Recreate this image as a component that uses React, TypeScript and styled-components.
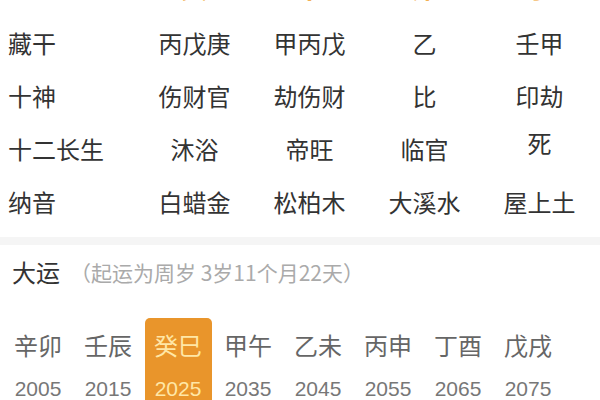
import React from "react";
import styled, { createGlobalStyle } from "styled-components";

const Global = createGlobalStyle`
  html, body { margin: 0; padding: 0; background: #f5f5f5; }
  body { font-family: "Noto Sans CJK SC", "Noto Sans", sans-serif; overflow: hidden; }
`;

const Page = styled.div`
  width: 600px;
  height: 400px;
  overflow: hidden;
  display: flex;
  flex-direction: column;
  gap: 8px;
`;

const Card = styled.section<{ $pad?: string; $grow?: boolean }>`
  background: #ffffff;
  padding: ${(p) => p.$pad || "0"};
  flex: ${(p) => (p.$grow ? 1 : "none")};
`;

const Table = styled.div`
  display: grid;
  grid-template-columns: 137px repeat(4, 115px);
  grid-template-rows: 60px repeat(4, 53px);
  margin-top: -44px;
`;

const Label = styled.div`
  display: flex;
  align-items: center;
  padding-left: 8px;
  font-size: 24px;
  color: #333;
  white-space: nowrap;
`;

const Cell = styled.div<{ $accent?: boolean; $shift?: number }>`
  display: flex;
  align-items: center;
  justify-content: center;
  font-size: ${(p) => (p.$accent ? "28px" : "24px")};
  font-weight: ${(p) => (p.$accent ? 700 : 400)};
  color: ${(p) => (p.$accent ? "#f0a02c" : "#333")};
  white-space: nowrap;
  transform: translateY(${(p) => p.$shift || 0}px);
`;

const Header = styled.div`
  display: flex;
  align-items: center;
  gap: 10px;
  padding: 15px 0 0 12px;
  line-height: 24px;
`;

const Title = styled.span`
  font-size: 24px;
  color: #333;
`;

const Sub = styled.span`
  font-size: 21px;
  color: #aaa;
`;

const Dayun = styled.div`
  display: grid;
  grid-template-columns: repeat(8, 70px);
  padding: 34px 0 0 3px;
`;

const Step = styled.div<{ $active?: boolean }>`
  display: flex;
  flex-direction: column;
  align-items: center;
  margin: 0 1.5px;
  padding-top: 14px;
  height: 90px;
  border-radius: 5px 5px 0 0;
  background: ${(p) => (p.$active ? "#e9952b" : "transparent")};
`;

const GanZhi = styled.div<{ $active?: boolean }>`
  font-size: 24px;
  line-height: 26px;
  color: ${(p) => (p.$active ? "#ffe7a6" : "#666")};
`;

const Year = styled.div<{ $active?: boolean }>`
  margin-top: 19px;
  font-size: 21px;
  line-height: 24px;
  color: ${(p) => (p.$active ? "#ffe7a6" : "#777")};
  font-family: "Liberation Sans", "Noto Sans", sans-serif;
`;

const rows: { label: string; values: string[]; accent?: boolean; shifts?: number[] }[] = [
  { label: "地支", values: ["寅", "午", "卯", "子"], accent: true },
  { label: "藏干", values: ["丙戊庚", "甲丙戊", "乙", "壬甲"] },
  { label: "十神", values: ["伤财官", "劫伤财", "比", "印劫"] },
  { label: "十二长生", values: ["沐浴", "帝旺", "临官", "死"], shifts: [0, 0, 0, -6] },
  { label: "纳音", values: ["白蜡金", "松柏木", "大溪水", "屋上土"] },
];

const steps = [
  ["辛卯", "2005"],
  ["壬辰", "2015"],
  ["癸巳", "2025"],
  ["甲午", "2035"],
  ["乙未", "2045"],
  ["丙申", "2055"],
  ["丁酉", "2065"],
  ["戊戌", "2075"],
];

export default function App() {
  return (
    <Page>
      <Global />
      <Card $pad="0 0 9px 0">
        <Table>
          {rows.map((r) => (
            <React.Fragment key={r.label}>
              <Label>{r.label}</Label>
              {r.values.map((v, i) => (
                <Cell key={i} $accent={r.accent} $shift={r.shifts?.[i]}>
                  {v}
                </Cell>
              ))}
            </React.Fragment>
          ))}
        </Table>
      </Card>
      <Card $grow>
        <Header>
          <Title>大运</Title>
          <Sub>（起运为周岁 3岁11个月22天）</Sub>
        </Header>
        <Dayun>
          {steps.map(([g, y], i) => (
            <Step key={y} $active={i === 2}>
              <GanZhi $active={i === 2}>{g}</GanZhi>
              <Year $active={i === 2}>{y}</Year>
            </Step>
          ))}
        </Dayun>
      </Card>
    </Page>
  );
}
